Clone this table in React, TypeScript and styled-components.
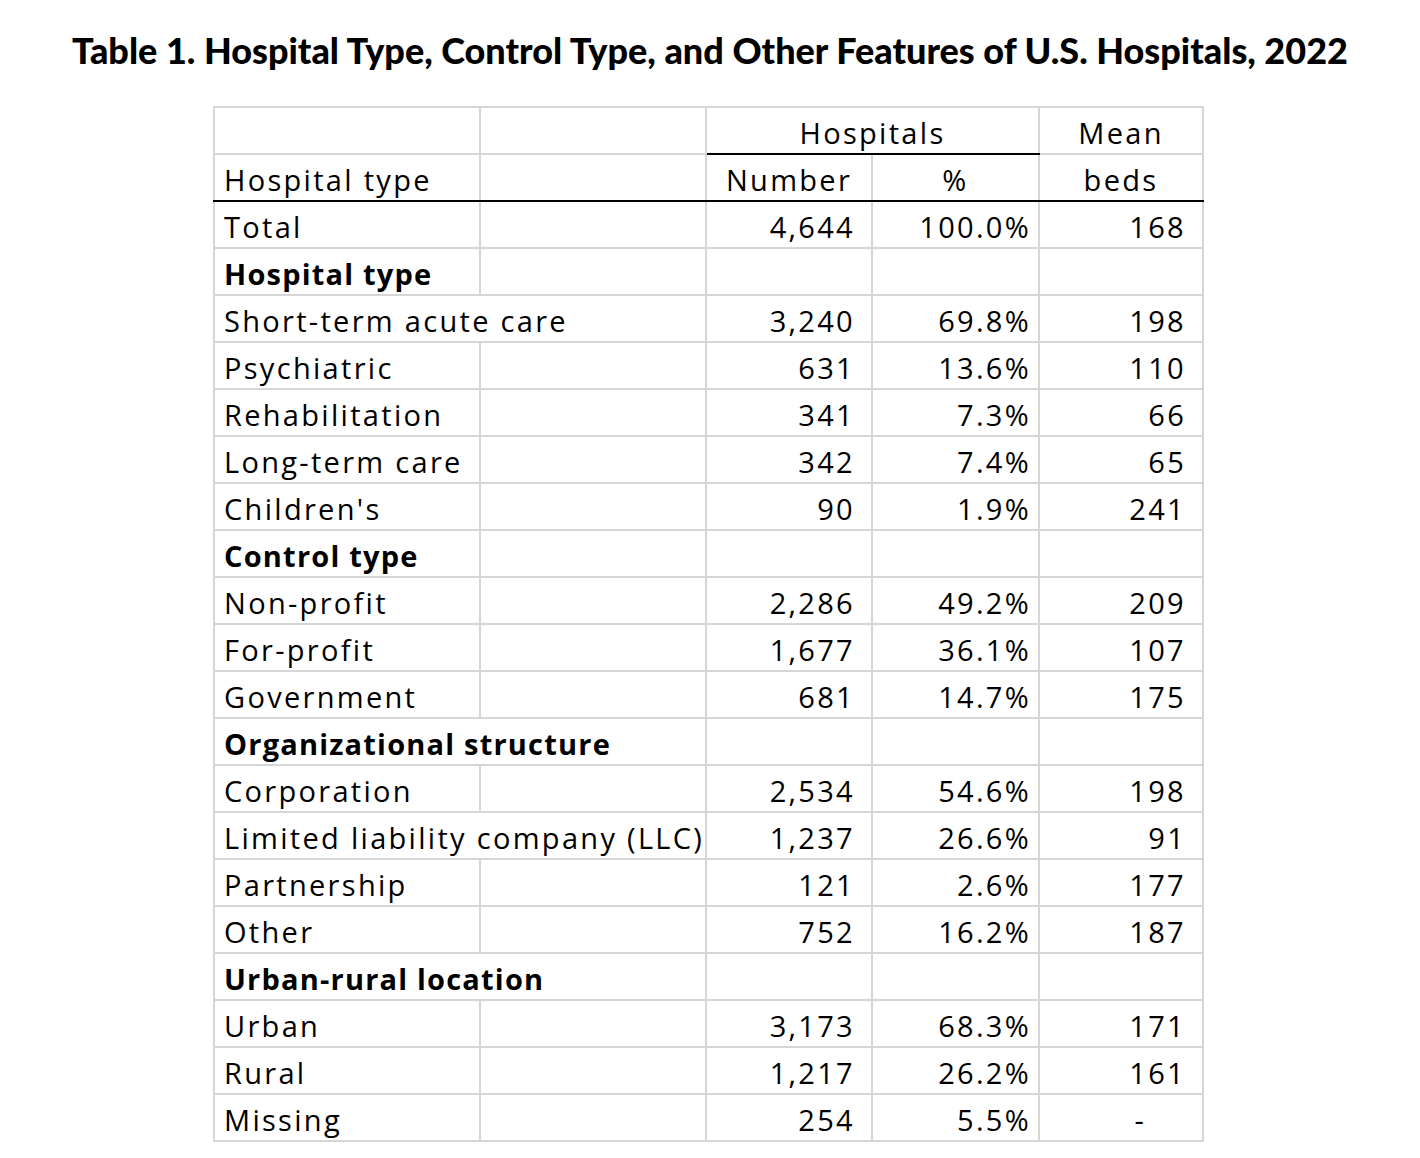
import { createGlobalStyle, styled } from "styled-components";

const GlobalStyle = createGlobalStyle`
    html, body {
        margin: 0;
        padding: 0;
        background: #ffffff;
    }
    body {
        font-family: "Open Sans", "Liberation Sans", sans-serif;
        color: #000000;
    }
`;

const Page = styled.div`
    width: 1420px;
    height: 1158px;
    padding-top: 27px;
    box-sizing: border-box;
`;

const Title = styled.h1`
    margin: 0;
    height: 79px;
    text-align: center;
    font-family: "Lato", "Open Sans", sans-serif;
    font-weight: 900;
    font-size: 36px;
    line-height: 46px;
`;

const Table = styled.table`
    margin-left: 213px;
    border-collapse: collapse;
    table-layout: fixed;
    width: 989px;
    font-size: 29px;
    letter-spacing: 2.3px;
`;

const Row = styled.tr`
    height: 47px;
`;

const Cell = styled.td<{ $align?: "left" | "right" | "center"; $pad?: number; $bold?: boolean; $under?: boolean }>`
    border: 2px solid #d6d6d6;
    padding: 0 ${(p) => p.$pad ?? 10}px 1px ${(p) => (p.$align === "left" || !p.$align ? 9 : 0)}px;
    text-align: ${(p) => p.$align ?? "left"};
    vertical-align: bottom;
    white-space: nowrap;
    overflow: hidden;
    line-height: 38px;
    font-weight: ${(p) => (p.$bold ? 700 : 400)};
    letter-spacing: ${(p) => (p.$bold ? "1.2px" : "inherit")};
    ${(p) => (p.$under ? "border-bottom: 2px solid #000000;" : "")}
`;

type Line = {
    label: string;
    kind: "total" | "section" | "item";
    wide?: boolean;
    num?: string;
    pct?: string;
    beds?: string;
};

const lines: Line[] = [
    { label: "Total", kind: "total", num: "4,644", pct: "100.0%", beds: "168" },
    { label: "Hospital type", kind: "section" },
    { label: "Short-term acute care", kind: "item", wide: true, num: "3,240", pct: "69.8%", beds: "198" },
    { label: "Psychiatric", kind: "item", num: "631", pct: "13.6%", beds: "110" },
    { label: "Rehabilitation", kind: "item", num: "341", pct: "7.3%", beds: "66" },
    { label: "Long-term care", kind: "item", num: "342", pct: "7.4%", beds: "65" },
    { label: "Children's", kind: "item", num: "90", pct: "1.9%", beds: "241" },
    { label: "Control type", kind: "section" },
    { label: "Non-profit", kind: "item", num: "2,286", pct: "49.2%", beds: "209" },
    { label: "For-profit", kind: "item", num: "1,677", pct: "36.1%", beds: "107" },
    { label: "Government", kind: "item", num: "681", pct: "14.7%", beds: "175" },
    { label: "Organizational structure", kind: "section", wide: true },
    { label: "Corporation", kind: "item", num: "2,534", pct: "54.6%", beds: "198" },
    { label: "Limited liability company (LLC)", kind: "item", wide: true, num: "1,237", pct: "26.6%", beds: "91" },
    { label: "Partnership", kind: "item", num: "121", pct: "2.6%", beds: "177" },
    { label: "Other", kind: "item", num: "752", pct: "16.2%", beds: "187" },
    { label: "Urban-rural location", kind: "section", wide: true },
    { label: "Urban", kind: "item", num: "3,173", pct: "68.3%", beds: "171" },
    { label: "Rural", kind: "item", num: "1,217", pct: "26.2%", beds: "161" },
    { label: "Missing", kind: "item", num: "254", pct: "5.5%", beds: "-" },
];

export default function App() {
    return (
        <>
            <GlobalStyle />
            <Page>
                <Title>Table 1. Hospital Type, Control Type, and Other Features of U.S. Hospitals, 2022</Title>
                <Table>
                    <colgroup>
                        <col style={{ width: 266 }} />
                        <col style={{ width: 226 }} />
                        <col style={{ width: 166 }} />
                        <col style={{ width: 167 }} />
                        <col style={{ width: 164 }} />
                    </colgroup>
                    <tbody>
                        <Row>
                            <Cell />
                            <Cell />
                            <Cell colSpan={2} $align="center" $pad={0} $under>Hospitals</Cell>
                            <Cell $align="center" $pad={0}>Mean</Cell>
                        </Row>
                        <Row>
                            <Cell $under>Hospital type</Cell>
                            <Cell $under />
                            <Cell $align="center" $pad={0} $under>Number</Cell>
                            <Cell $align="center" $pad={0} $under>%</Cell>
                            <Cell $align="center" $pad={0} $under>beds</Cell>
                        </Row>
                        {lines.map((l) => (
                            <Row key={l.label}>
                                {l.wide ? (
                                    <Cell colSpan={2} $bold={l.kind === "section"}>{l.label}</Cell>
                                ) : (
                                    <>
                                        <Cell $bold={l.kind === "section"}>{l.label}</Cell>
                                        <Cell />
                                    </>
                                )}
                                <Cell $align="right" $pad={16}>{l.num}</Cell>
                                <Cell $align="right" $pad={7}>{l.pct}</Cell>
                                <Cell $align="right" $pad={l.beds === "-" ? 56 : 16}>{l.beds}</Cell>
                            </Row>
                        ))}
                    </tbody>
                </Table>
            </Page>
        </>
    );
}
